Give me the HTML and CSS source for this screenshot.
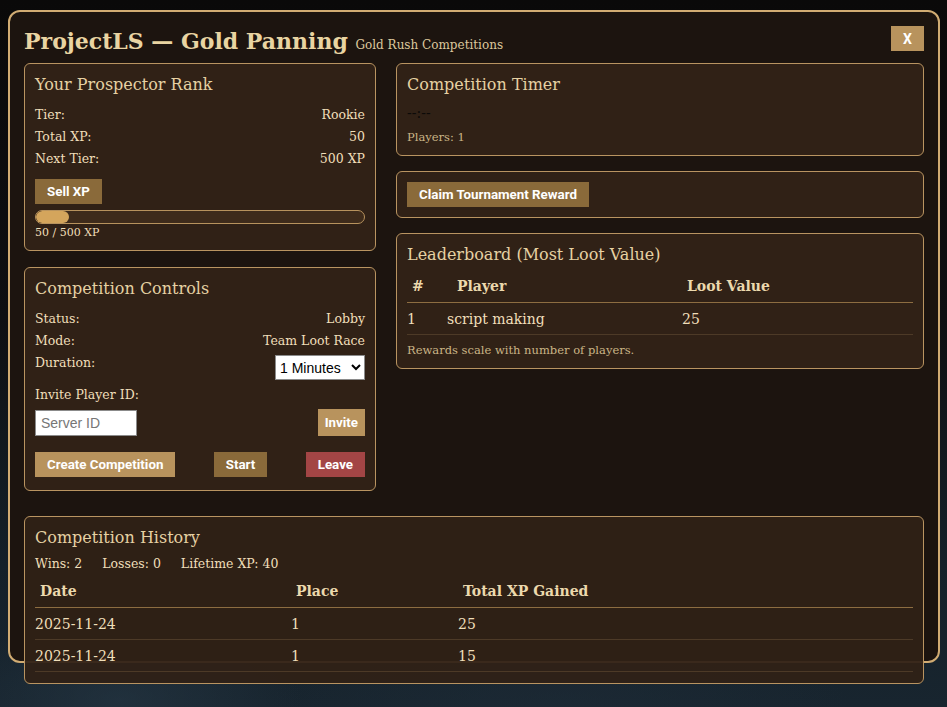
FILE: index.html
```html
<!DOCTYPE html>
<html lang="en">
<head>
<meta charset="utf-8">
<title>ProjectLS — Gold Panning</title>
<link rel="stylesheet" href="styles.css">
</head>
<body>
<div class="modal">
  <header class="modal-head">
    <h1 class="title">ProjectLS — Gold Panning <span class="subtitle">Gold Rush Competitions</span></h1>
    <button class="btn btn-light btn-close">X</button>
  </header>

  <div class="main">
    <div class="col col-left">
      <section class="panel rank">
        <h3>Your Prospector Rank</h3>
        <div class="row"><span>Tier:</span><span>Rookie</span></div>
        <div class="row"><span>Total XP:</span><span>50</span></div>
        <div class="row"><span>Next Tier:</span><span>500 XP</span></div>
        <button class="btn btn-dark btn-sell">Sell XP</button>
        <div class="progress"><div class="progress-fill" style="width:10%"></div></div>
        <div class="progress-label">50 / 500 XP</div>
      </section>

      <section class="panel controls">
        <h3>Competition Controls</h3>
        <div class="row"><span>Status:</span><span>Lobby</span></div>
        <div class="row"><span>Mode:</span><span>Team Loot Race</span></div>
        <div class="row row-top">
          <span>Duration:</span>
          <select class="select">
            <option>1 Minutes</option>
            <option>3 Minutes</option>
            <option>5 Minutes</option>
          </select>
        </div>
        <div class="field-label">Invite Player ID:</div>
        <div class="invite">
          <input class="input" type="text" placeholder="Server ID">
          <button class="btn btn-light btn-invite">Invite</button>
        </div>
        <div class="actions">
          <button class="btn btn-light">Create Competition</button>
          <button class="btn btn-dark">Start</button>
          <button class="btn btn-red">Leave</button>
        </div>
      </section>
    </div>

    <div class="col col-right">
      <section class="panel timer">
        <h3>Competition Timer</h3>
        <div class="clock">--:--</div>
        <div class="muted players">Players: 1</div>
      </section>

      <section class="panel claim">
        <button class="btn btn-dark">Claim Tournament Reward</button>
      </section>

      <section class="panel board">
        <h3>Leaderboard (Most Loot Value)</h3>
        <table class="table lb">
          <thead>
            <tr><th class="c-rank">#</th><th class="c-player">Player</th><th class="c-loot">Loot Value</th></tr>
          </thead>
          <tbody>
            <tr><td>1</td><td>script making</td><td>25</td></tr>
          </tbody>
        </table>
        <div class="muted note">Rewards scale with number of players.</div>
      </section>
    </div>
  </div>

  <section class="panel history">
    <h3>Competition History</h3>
    <div class="stats"><span>Wins: 2</span><span>Losses: 0</span><span>Lifetime XP: 40</span></div>
    <table class="table hist">
      <thead>
        <tr><th class="c-date">Date</th><th class="c-place">Place</th><th>Total XP Gained</th></tr>
      </thead>
      <tbody>
        <tr><td>2025-11-24</td><td>1</td><td>25</td></tr>
        <tr><td>2025-11-24</td><td>1</td><td>15</td></tr>
      </tbody>
    </table>
  </section>
</div>
</body>
</html>
```

FILE: styles.css
```css
* { box-sizing: border-box; }

html, body {
  margin: 0;
  height: 100%;
}

body {
  font-family: "DejaVu Serif", Georgia, serif;
  color: #f0dfba;
  background:
    radial-gradient(ellipse 260px 120px at 120px 700px, rgba(40, 58, 72, 0.55), transparent 70%),
    radial-gradient(ellipse 420px 160px at 560px 720px, rgba(30, 44, 56, 0.6), transparent 70%),
    linear-gradient(180deg, #0a0909 0%, #0e0f12 45%, #142029 80%, #18252f 100%);
  overflow: hidden;
}

/* main window */
.modal {
  width: 932px;
  height: 653px;
  margin: 10px 0 0 8px;
  padding: 14px 14px 0 14px;
  border: 2px solid #d1ac73;
  border-radius: 12px;
  background: #1c140f;
}

.modal-head {
  display: flex;
  justify-content: space-between;
  align-items: flex-start;
  height: 37px;
}

.title {
  margin: 0;
  font-size: 22px;
  line-height: 30px;
  font-weight: 700;
  color: #e9d4a2;
  white-space: nowrap;
}

.subtitle {
  font-size: 12px;
  font-weight: 400;
  color: #dcc89d;
}

/* buttons */
.btn {
  border: 0;
  border-radius: 0;
  font-family: Roboto, "Liberation Sans", Arial, sans-serif;
  font-weight: 700;
  font-size: 13.333px;
  color: #fff;
  height: 25px;
  padding: 0 12px;
  cursor: pointer;
}

.btn-light { background: #b8935d; }
.btn-dark  { background: #8a6a3a; }
.btn-red   { background: #a34545; }

.btn-close {
  width: 33px;
  padding: 0;
  font-size: 14px;
}

/* layout */
.main {
  display: grid;
  grid-template-columns: 2fr 3fr;
  gap: 20px;
  align-items: start;
}

.col {
  display: flex;
  flex-direction: column;
}

.col-left { gap: 16px; }
.col-right { gap: 15px; }

.panel {
  border: 1px solid #b99461;
  border-radius: 6px;
  background: #302116;
  padding: 9px 10px 9px;
}

.panel h3 {
  margin: 0;
  font-size: 16px;
  line-height: 24px;
  font-weight: 400;
  color: #e6d1a3;
}

.row {
  display: flex;
  justify-content: space-between;
  font-size: 12.5px;
  line-height: 22px;
}

.rank .row:first-of-type,
.controls .row:first-of-type { margin-top: 7px; }

.row-top { align-items: flex-start; }

/* rank progress */
.rank { padding-bottom: 10px; }

.btn-sell {
  display: block;
  margin-top: 9px;
}

.progress {
  margin-top: 6px;
  height: 14px;
  border: 1px solid #b8935d;
  border-radius: 8px;
  background: #3e2b1b;
  overflow: hidden;
}

.progress-fill {
  height: 100%;
  background: #d4a55c;
  border-radius: 8px;
}

.progress-label {
  margin-top: 2px;
  font-size: 11px;
  line-height: 14px;
}

/* controls */
.select {
  margin-top: 3px;
  width: 90px;
  height: 25px;
  font-family: "Liberation Sans", Arial, sans-serif;
  font-size: 14px;
  color: #000;
  background: #fff;
  border: 1px solid #8b8b8b;
  border-radius: 0;
}

.field-label {
  margin-top: 4px;
  font-size: 12.5px;
  line-height: 22px;
}

.invite {
  display: flex;
  justify-content: space-between;
  align-items: center;
  margin-top: 3px;
}

.input {
  width: 102px;
  height: 26px;
  padding: 0 5px;
  border: 1px solid #8b8b8b;
  border-radius: 0;
  background: #fff;
  font-family: "Liberation Sans", Arial, sans-serif;
  font-size: 14px;
}

.input::placeholder { color: #767676; }

.btn-invite {
  height: 27px;
  padding: 0 7px;
}

.actions {
  display: flex;
  justify-content: space-between;
  margin-top: 16px;
  margin-bottom: 4px;
}

/* timer */
.clock {
  margin-top: 6px;
  font-size: 14px;
  line-height: 20px;
  color: #0c0a08;
}

.muted {
  color: #cab586;
  font-size: 11.5px;
}

.players {
  margin-top: 5px;
  line-height: 18px;
}

.claim { padding: 10px; }

/* tables */
.table {
  width: 100%;
  border-collapse: collapse;
  font-size: 14px;
}

.table th {
  text-align: left;
  font-weight: 700;
  color: #ecd9ad;
  line-height: 20px;
  padding: 6px 0 6px 5px;
  border-bottom: 1px solid #8d6d41;
}

.table td {
  line-height: 20px;
  padding: 6px 0 5px;
  border-bottom: 1px solid #4d3a27;
  color: #f0dfba;
}

.lb { margin-top: 3px; }
.lb .c-rank { width: 40px; }
.lb .c-player { width: 235px; padding-left: 10px; }

.note {
  margin-top: 6px;
  line-height: 18px;
}

/* history */
.history {
  position: relative;
  margin-top: 25px;
  background: rgba(48, 33, 22, 0.94);
  padding-bottom: 11px;
}

.stats {
  margin-top: 5px;
  font-size: 12.5px;
  line-height: 18px;
  display: flex;
  gap: 20px;
}

.hist { margin-top: 2px; }
.hist .c-date { width: 256px; }
.hist .c-place { width: 167px; }
```
